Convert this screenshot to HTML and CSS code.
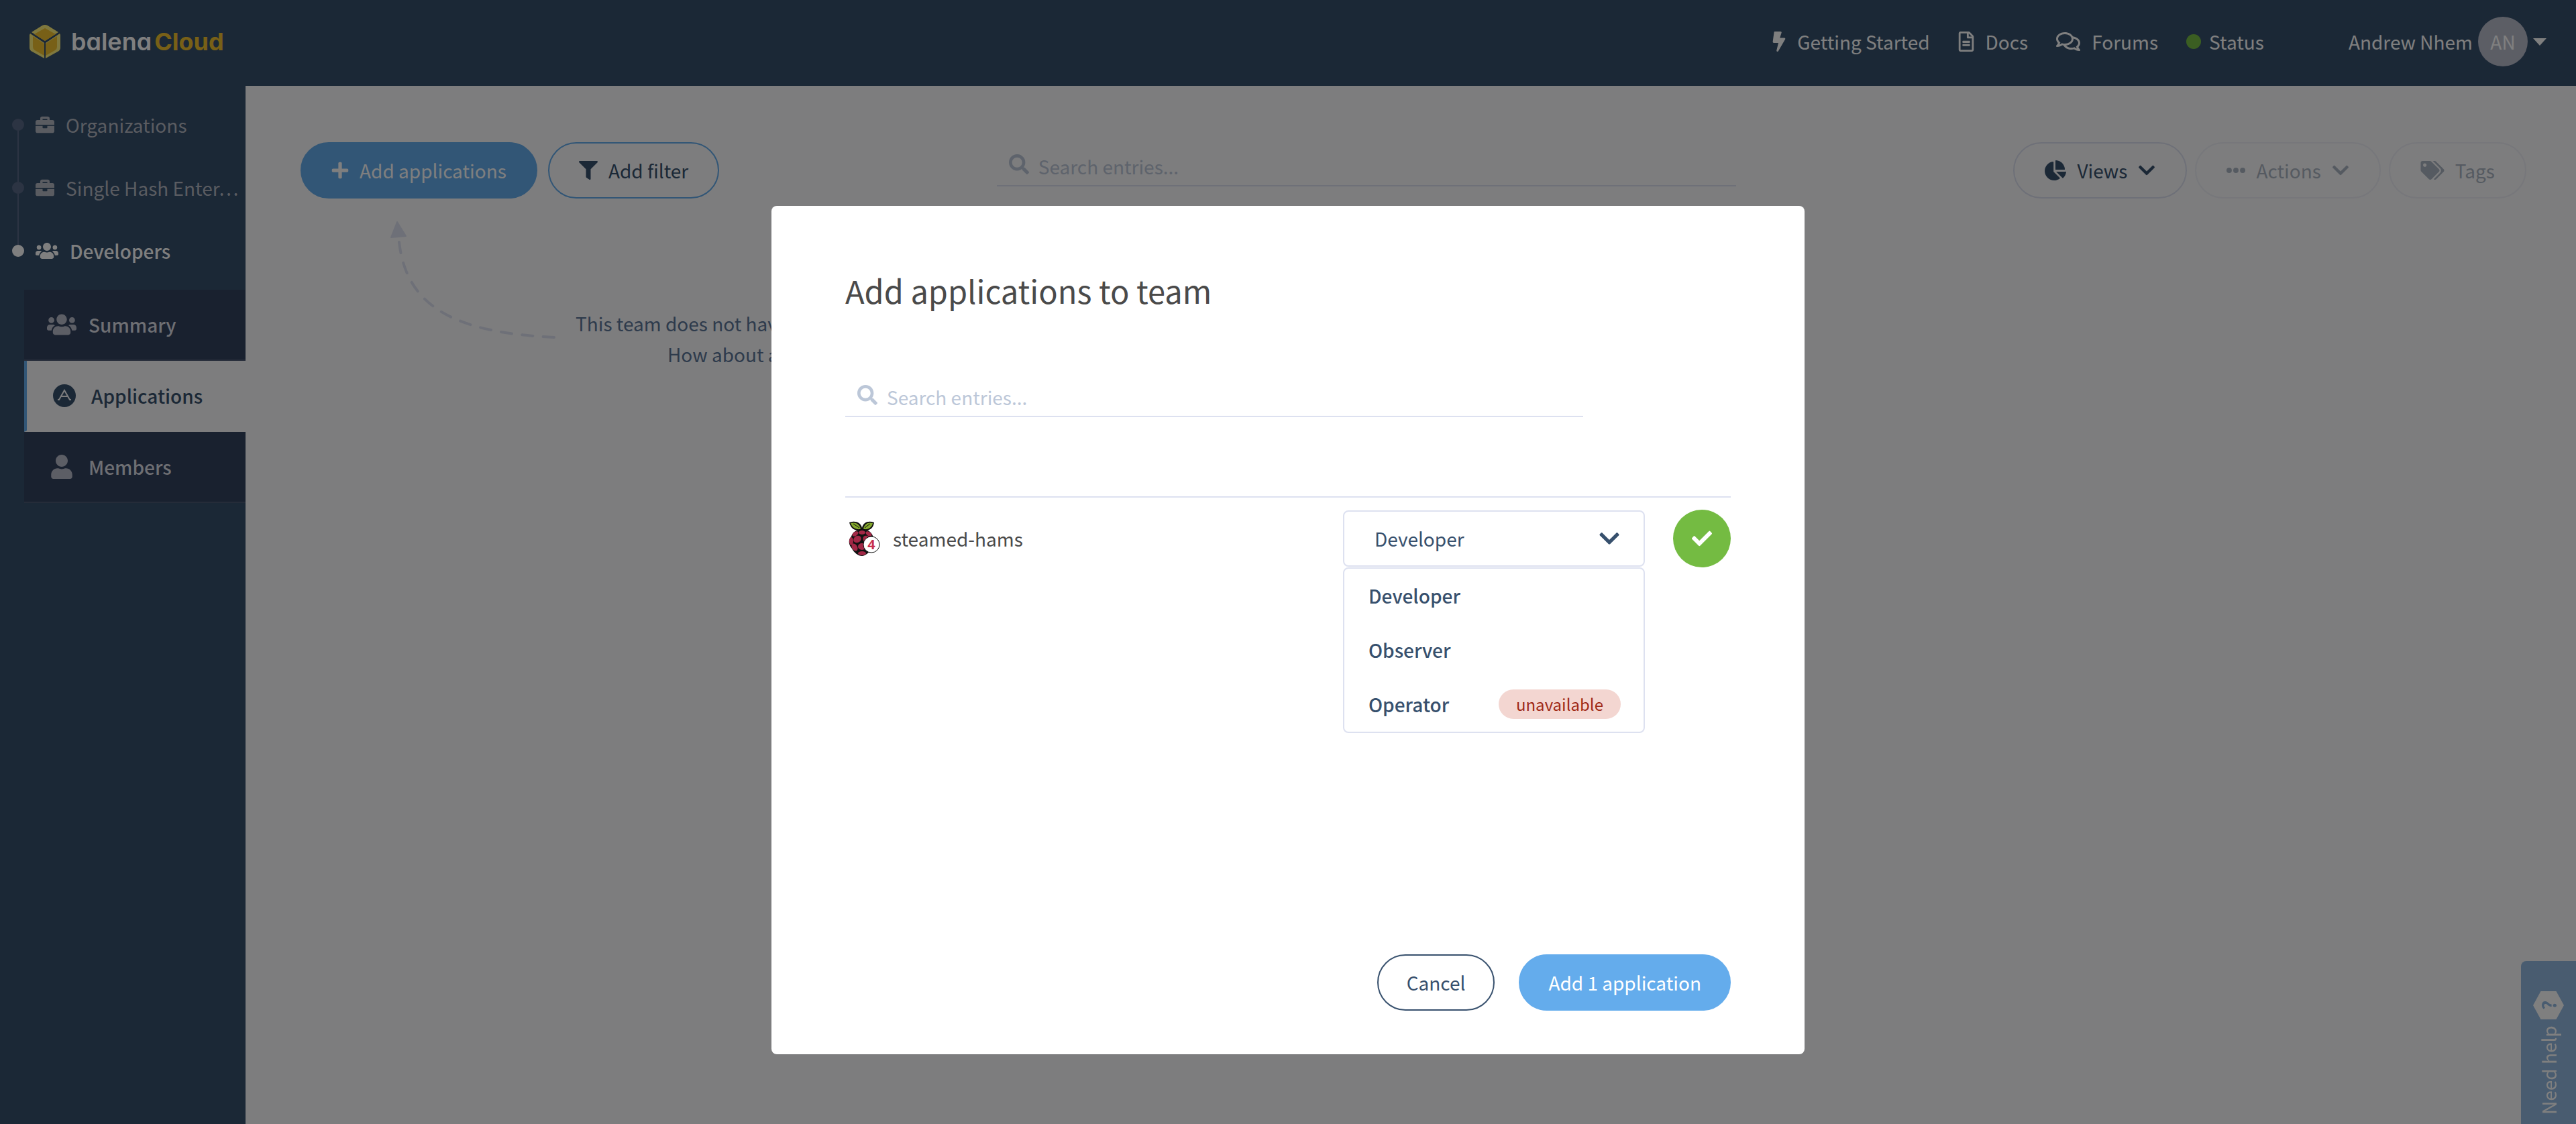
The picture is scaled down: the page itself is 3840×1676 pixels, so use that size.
FILE: index.html
```html
<!DOCTYPE html>
<html lang="en">
<head>
<meta charset="utf-8">
<title>Developers – Applications – balenaCloud</title>
<meta name="viewport" content="width=device-width, initial-scale=1">
<link rel="stylesheet" href="styles.css">
</head>
<body>

<svg class="sprite" aria-hidden="true">
  <symbol id="i-bolt" viewBox="0 0 320 512"><path d="M296 160H180.600l42.600-129.800C227.200 15 215.700 0 200 0H56C44 0 33.800 8.900 32.200 20.800l-32 240C-1.700 275.200 9.500 288 24 288h118.700L96.600 482.500c-3.600 15.200 8 29.500 23.300 29.500 8.400 0 16.400-4.400 20.800-12l176-304c9.300-15.900-2.200-36-20.700-36z"/></symbol>
  <symbol id="i-file" viewBox="0 0 384 512"><path d="M288 248v28c0 6.600-5.400 12-12 12H108c-6.600 0-12-5.400-12-12v-28c0-6.600 5.400-12 12-12h168c6.600 0 12 5.400 12 12zm-12 72H108c-6.600 0-12 5.400-12 12v28c0 6.600 5.400 12 12 12h168c6.600 0 12-5.400 12-12v-28c0-6.600-5.400-12-12-12zm108-188.100V464c0 26.500-21.500 48-48 48H48c-26.500 0-48-21.500-48-48V48C0 21.500 21.500 0 48 0h204.100C264.800 0 277 5.100 286 14.100L369.900 98c9 8.900 14.100 21.200 14.100 33.900zm-128-80V128h76.100L256 51.900zM336 464V176H232c-13.300 0-24-10.700-24-24V48H48v416h288z"/></symbol>
  <symbol id="i-comments" viewBox="0 0 576 512"><path d="M532 386.200c27.500-27.100 44-61.100 44-98.200 0-80-76.500-146.100-176.200-157.900C368.300 72.500 294.300 32 208 32 93.100 32 0 103.600 0 192c0 37 16.500 71 44 98.200-15.300 30.700-37.300 54.500-37.700 54.900-6.300 6.700-8.100 16.500-4.400 25 3.600 8.500 12 14 21.200 14 53.500 0 96.700-20.200 125.200-38.800 9.200 2.100 18.700 3.700 28.400 4.900C208.100 407.600 281.800 448 368 448c20.800 0 40.800-2.400 59.800-6.800C456.300 459.700 499.400 480 553 480c9.200 0 17.500-5.500 21.200-14 3.600-8.500 1.900-18.300-4.400-25-.4-.3-22.500-24.100-37.800-54.800zm-392.800-92.300L122.100 305c-14.100 9.100-28.500 16.300-43.100 21.400 2.700-4.700 5.400-9.700 8-14.800l15.500-31.100L77.700 256C64.200 242.600 48 220.700 48 192c0-60.700 73.300-112 160-112s160 51.300 160 112-73.300 112-160 112c-16.500 0-33-1.900-49-5.600l-19.800-4.500zM498.300 352l-24.700 24.400 15.500 31.100c2.600 5.100 5.300 10.100 8 14.800-14.600-5.100-29-12.300-43.100-21.400l-17.100-11.100-19.900 4.600c-16 3.700-32.500 5.600-49 5.600-54 0-102.200-20.100-131.300-49.700C338 339.500 416 272.900 416 192c0-3.400-.4-6.700-.7-10C479.700 196.500 528 238.800 528 288c0 28.700-16.200 50.600-29.700 64z"/></symbol>
  <symbol id="i-search" viewBox="0 0 512 512"><path d="M505 442.700L405.300 343c-4.500-4.500-10.600-7-17-7H372c27.600-35.300 44-79.700 44-128C416 93.100 322.900 0 208 0S0 93.100 0 208s93.100 208 208 208c48.300 0 92.700-16.400 128-44v16.300c0 6.400 2.500 12.500 7 17l99.700 99.700c9.400 9.400 24.600 9.400 33.900 0l28.300-28.300c9.400-9.400 9.400-24.600.1-34zM208 336c-70.700 0-128-57.200-128-128 0-70.700 57.200-128 128-128 70.700 0 128 57.200 128 128 0 70.700-57.200 128-128 128z"/></symbol>
  <symbol id="i-filter" viewBox="0 0 512 512"><path d="M487.976 0H24.028C2.710 0-8.047 25.866 7.058 40.971L192 225.941V432c0 7.831 3.821 15.170 10.237 19.662l80 55.980C298.020 518.690 320 507.493 320 487.980V225.941l184.947-184.970C520.021 25.896 509.338 0 487.976 0z"/></symbol>
  <symbol id="i-plus" viewBox="0 0 448 512"><path d="M416 208H272V64c0-17.670-14.330-32-32-32h-32c-17.670 0-32 14.330-32 32v144H32c-17.670 0-32 14.330-32 32v32c0 17.670 14.330 32 32 32h144v144c0 17.670 14.330 32 32 32h32c17.670 0 32-14.330 32-32V304h144c17.670 0 32-14.330 32-32v-32c0-17.670-14.330-32-32-32z"/></symbol>
  <symbol id="i-users" viewBox="0 0 640 512"><path d="M96 224c35.300 0 64-28.700 64-64s-28.700-64-64-64-64 28.700-64 64 28.700 64 64 64zm448 0c35.300 0 64-28.700 64-64s-28.700-64-64-64-64 28.700-64 64 28.700 64 64 64zm32 32h-64c-17.600 0-33.500 7.100-45.100 18.600 40.300 22.100 68.900 62 75.100 109.400h66c17.700 0 32-14.300 32-32v-32c0-35.300-28.700-64-64-64zm-256 0c61.900 0 112-50.100 112-112S381.900 32 320 32 208 82.100 208 144s50.100 112 112 112zm76.800 32h-8.300c-20.800 10-43.900 16-68.500 16s-47.600-6-68.500-16h-8.300C179.600 288 128 339.600 128 403.200V432c0 26.500 21.500 48 48 48h288c26.500 0 48-21.500 48-48v-28.800c0-63.600-51.600-115.200-115.200-115.200zm-223.700-13.400C161.500 263.100 145.600 256 128 256H64c-35.300 0-64 28.700-64 64v32c0 17.700 14.300 32 32 32h65.900c6.300-47.400 34.900-87.300 75.200-109.400z"/></symbol>
  <symbol id="i-user" viewBox="0 0 448 512"><path d="M224 256c70.700 0 128-57.300 128-128S294.700 0 224 0 96 57.300 96 128s57.300 128 128 128zm89.600 32h-16.700c-22.200 10.200-46.900 16-72.900 16s-50.600-5.800-72.900-16h-16.700C60.200 288 0 348.200 0 422.400V464c0 26.500 21.500 48 48 48h352c26.500 0 48-21.500 48-48v-41.600c0-74.200-60.200-134.400-134.400-134.400z"/></symbol>
  <symbol id="i-briefcase" viewBox="0 0 512 512"><path d="M320 336c0 8.840-7.160 16-16 16h-96c-8.840 0-16-7.160-16-16v-48H0v144c0 25.600 22.400 48 48 48h416c25.600 0 48-22.400 48-48V288H320v48zm144-208h-80V80c0-25.600-22.400-48-48-48H176c-25.600 0-48 22.400-48 48v48H48c-25.600 0-48 22.400-48 48v80h512v-80c0-25.600-22.400-48-48-48zm-144 0H192V96h128v32z"/></symbol>
  <symbol id="i-chevron" viewBox="0 0 448 512"><path d="M207.029 381.476L12.686 187.132c-9.373-9.373-9.373-24.569 0-33.941l22.667-22.667c9.357-9.357 24.522-9.375 33.901-.04L224 284.505l154.745-154.021c9.379-9.335 24.544-9.317 33.901.04l22.667 22.667c9.373 9.373 9.373 24.569 0 33.941L240.971 381.476c-9.373 9.372-24.569 9.372-33.942 0z"/></symbol>
  <symbol id="i-check" viewBox="0 0 512 512"><path d="M173.898 439.404l-166.400-166.400c-9.997-9.997-9.997-26.206 0-36.204l36.203-36.204c9.997-9.998 26.207-9.998 36.204 0L192 312.690 432.095 72.596c9.997-9.997 26.207-9.997 36.204 0l36.203 36.204c9.997 9.997 9.997 26.206 0 36.204l-294.400 294.401c-9.998 9.997-26.207 9.997-36.204-.001z"/></symbol>
  <symbol id="i-dots" viewBox="0 0 512 512"><circle cx="72" cy="256" r="72"/><circle cx="256" cy="256" r="72"/><circle cx="440" cy="256" r="72"/></symbol>
  <symbol id="i-tags" viewBox="0 0 640 512"><path d="M497.941 225.941L286.059 14.059A48 48 0 0 0 252.118 0H48C21.490 0 0 21.490 0 48v204.118a48 48 0 0 0 14.059 33.941l211.882 211.882c18.744 18.745 49.136 18.746 67.882 0l204.118-204.118c18.745-18.745 18.745-49.137 0-67.882zM112 160c-26.510 0-48-21.490-48-48s21.490-48 48-48 48 21.490 48 48-21.490 48-48 48zm513.941 133.823L421.823 497.941c-18.745 18.745-49.137 18.745-67.882 0l-.36-.36L527.640 323.522c16.999-16.999 26.360-39.600 26.360-63.640s-9.362-46.641-26.360-63.640L331.397 0h48.721a48 48 0 0 1 33.941 14.059l211.882 211.882c18.745 18.745 18.745 49.137 0 67.882z"/></symbol>
  <symbol id="i-pie" viewBox="0 0 544 512"><path d="M527.790 288H290.500l158.030 158.030c6.040 6.040 15.980 6.530 22.190.68 38.700-36.460 65.320-85.610 73.130-140.860 1.340-9.460-6.510-17.850-16.060-17.850zm-15.830-64.800C503.720 103.740 408.260 8.280 288.800.04 279.680-.59 272 7.100 272 16.240V240h223.770c9.140 0 16.820-7.680 16.190-16.800zM224 288V50.710c0-9.550-8.390-17.400-17.840-16.060C86.990 51.490-4.100 155.600.14 280.370 4.500 408.510 114.830 513.590 243.030 511.980c50.400-.63 96.970-16.870 135.260-44.030 7.900-5.600 8.420-17.230 1.570-24.080L224 288z"/></symbol>
</svg>

<header class="topbar">
  <a class="brand" href="#" aria-label="balenaCloud">
    <svg class="brand-mark" viewBox="0 0 46 50" aria-hidden="true">
      <path fill="#fff07c" d="M3 11 L19 1 Q23 -1 27 1 L43 11 L23 24Z M1 13 L22 27 V50 L4 40 Q0 38 0 34 V15Z M45 13 L24 27 V50 L42 40 Q46 38 46 34 V15Z"/>
      <path fill="#f0c12e" d="M23 5 L39 14 L23 24 L7 14Z M5 17 L22 28 V46 L8 38 Q5 36 5 33Z M41 17 L24 28 V46 L38 38 Q41 36 41 33Z"/>
    </svg>
    <span class="brand-name">balena<span class="brand-cloud">Cloud</span></span>
  </a>
  <nav class="top-links" aria-label="Help">
    <a href="#"><svg class="ic-bolt"><use href="#i-bolt"/></svg>Getting Started</a>
    <a href="#"><svg class="ic-file"><use href="#i-file"/></svg>Docs</a>
    <a href="#"><svg class="ic-comments"><use href="#i-comments"/></svg>Forums</a>
    <a class="status" href="#"><span class="status-dot"></span>Status</a>
  </nav>
  <button class="account" type="button">Andrew Nhem<span class="avatar">AN</span><span class="caret"></span></button>
</header>

<div class="shell">
  <aside class="sidebar">
    <ul class="crumbs">
      <li><a href="#"><span class="dot"></span><svg class="ic-28"><use href="#i-briefcase"/></svg><span class="crumb-text">Organizations</span></a></li>
      <li><a href="#"><span class="dot"></span><svg class="ic-28"><use href="#i-briefcase"/></svg><span class="crumb-text">Single Hash Enter…</span></a></li>
      <li class="current"><a href="#"><span class="dot"></span><svg class="ic-crumb-users"><use href="#i-users"/></svg><span class="crumb-text">Developers</span></a></li>
    </ul>
    <ul class="submenu">
      <li><a href="#"><span class="slot"><svg class="ic-users"><use href="#i-users"/></svg></span>Summary</a></li>
      <li class="active"><a href="#"><span class="slot"><svg class="ic-app" viewBox="0 0 34 34"><circle cx="17" cy="17" r="17"/><path d="M7 23 H9 L17 9 L25 23 H27 M12 18 H22" fill="none" stroke="#fafafc" stroke-width="2"/></svg></span>Applications</a></li>
      <li><a href="#"><span class="slot"><svg class="ic-user"><use href="#i-user"/></svg></span>Members</a></li>
    </ul>
  </aside>

  <main class="content">
    <div class="toolbar">
      <div class="group-left">
        <button class="btn btn-primary" type="button"><svg class="ic-plus"><use href="#i-plus"/></svg>Add applications</button>
        <button class="btn btn-outline" type="button"><svg class="ic-28"><use href="#i-filter"/></svg>Add filter</button>
      </div>
      <label class="search page-search"><svg class="ic-search"><use href="#i-search"/></svg><input type="text" placeholder="Search entries..." aria-label="Search applications"></label>
      <div class="group-right">
        <button class="btn btn-quiet" type="button"><svg class="ic-pie"><use href="#i-pie"/></svg>Views<svg class="ic-chevron"><use href="#i-chevron"/></svg></button>
        <button class="btn btn-quiet" type="button" disabled><svg class="ic-28"><use href="#i-dots"/></svg>Actions<svg class="ic-chevron"><use href="#i-chevron"/></svg></button>
        <button class="btn btn-quiet" type="button" disabled><svg class="ic-tags"><use href="#i-tags"/></svg>Tags</button>
      </div>
    </div>
    <div class="empty">
      <svg class="empty-arrow" viewBox="0 0 246 176" aria-hidden="true">
        <path d="M10 1 L23 22 L1 24Z" fill="#dde1f0" stroke="#dde1f0" stroke-width="2" stroke-linejoin="round"/>
        <path d="M13 31 C24 130 100 166 244 173" pathLength="295" fill="none" stroke="#dde1f0" stroke-width="4" stroke-linecap="round" stroke-dasharray="16 15"/>
      </svg>
      <p class="empty-text">This team does not have any applications yet<br>How about adding one?</p>
    </div>
  </main>
</div>

<button class="help" type="button"><span class="help-inner">Need help<span class="help-mark">?</span></span></button>

<div class="backdrop">
  <section class="modal" role="dialog" aria-modal="true" aria-labelledby="modal-title">
    <h2 id="modal-title">Add applications to team</h2>
    <label class="search modal-search"><svg class="ic-search"><use href="#i-search"/></svg><input type="text" placeholder="Search entries..." aria-label="Search entries"></label>
    <ul class="apps">
      <li class="app">
        <svg class="rpi" viewBox="0 0 46 52" aria-hidden="true">
          <path d="M19 13 C10 16 3 11 1 2 C9-1 18 1 20 10 C22 1 30-1 38 2 C37 11 30 16 21 13Z" fill="#111"/>
          <path d="M17 12 C10 13 5 9 3 3 C10 1 16 4 18 11Z M22 11 C24 4 29 1 36 3 C35 9 30 13 23 12Z" fill="#83a72c"/>
          <path d="M7 4 L16 10 M32 4 L24 10" stroke="#111" stroke-width="1"/>
          <path d="M20 12 C28 12 34 16 36 22 C41 30 38 36 35 40 C32 46 25 52 20 52 C14 52 8 47 5 41 C0 36-1 28 4 23 C6 16 13 12 20 12Z" fill="#111"/>
          <g fill="#a22846">
            <ellipse cx="20" cy="17" rx="5" ry="3"/>
            <ellipse cx="10" cy="19" rx="5" ry="3" transform="rotate(-35 10 19)"/>
            <ellipse cx="30" cy="19" rx="5" ry="3" transform="rotate(35 30 19)"/>
            <ellipse cx="13" cy="27" rx="6" ry="5" transform="rotate(-35 13 27)"/>
            <ellipse cx="27" cy="27" rx="6" ry="5" transform="rotate(35 27 27)"/>
            <ellipse cx="4" cy="30" rx="3" ry="6"/>
            <ellipse cx="9" cy="39" rx="4" ry="6" transform="rotate(-30 9 39)"/>
            <ellipse cx="20" cy="38" rx="6" ry="5"/>
            <ellipse cx="20" cy="48" rx="6" ry="3"/>
          </g>
          <circle cx="34" cy="35" r="12" fill="#fff" stroke="#111" stroke-width="1"/>
          <text class="rpi-num" x="34" y="42" text-anchor="middle">4</text>
        </svg>
        <span class="app-name">steamed-hams</span>
        <div class="role">
          <select class="role-select" aria-label="Role for steamed-hams">
            <option selected>Developer</option>
            <option>Observer</option>
            <option disabled>Operator</option>
          </select>
          <svg class="role-chevron"><use href="#i-chevron"/></svg>
          <ul class="role-menu" role="listbox" aria-label="Roles">
            <li role="option" aria-selected="true">Developer</li>
            <li role="option" aria-selected="false">Observer</li>
            <li role="option" aria-selected="false" aria-disabled="true">Operator<span class="badge">unavailable</span></li>
          </ul>
        </div>
        <button class="tick" type="button" aria-label="Selected"><svg class="ic-check"><use href="#i-check"/></svg></button>
      </li>
    </ul>
    <footer class="modal-actions">
      <button class="btn btn-cancel" type="button">Cancel</button>
      <button class="btn btn-primary" type="button">Add 1 application</button>
    </footer>
  </section>
</div>

</body>
</html>
```
FILE: styles.css
```css
:root {
  --navy: #37506d;
  --navy-dark: #32425e;
  --line: #dde1f0;
  --blue: #64acec;
  --page: #fafafc;
}

* { box-sizing: border-box; }

body {
  margin: 0;
  min-height: 100vh;
  display: flex;
  flex-direction: column;
  background: var(--page);
  color: var(--navy);
  font: 28px/40px "Noto Sans CJK KR", "Noto Sans CJK SC", "Noto Sans", sans-serif;
}

ul { list-style: none; margin: 0; padding: 0; }
a { color: inherit; text-decoration: none; }
button, input, select { font: inherit; color: inherit; }
svg { fill: currentColor; flex: none; }
.sprite { position: absolute; width: 0; height: 0; }

.ic-bolt { width: 20px; height: 30px; }
.ic-file { width: 24px; height: 30px; }
.ic-comments { width: 36px; height: 32px; }
.ic-28 { width: 28px; height: 28px; }
.ic-search { width: 30px; height: 30px; }
.ic-plus { width: 26px; height: 28px; }
.ic-pie { width: 32px; height: 30px; }
.ic-chevron { width: 26px; height: 28px; }
.ic-tags { width: 36px; height: 28px; }
.ic-crumb-users { width: 34px; height: 28px; }
.ic-users { width: 44px; height: 36px; }
.ic-app { width: 34px; height: 34px; }
.ic-user { width: 32px; height: 36px; }
.ic-check { width: 30px; height: 30px; }

/* Top bar */
.topbar {
  height: 128px;
  padding: 0 44px 4px;
  display: flex;
  align-items: center;
  background: var(--navy);
  color: #fff;
}
.brand { display: flex; align-items: center; gap: 16px; }
.brand-mark { width: 46px; height: 50px; }
.brand-name {
  font: 600 36px/40px Inter, sans-serif;
  font-feature-settings: "cv11";
}
.brand-cloud { color: #f0c12e; margin-left: 4px; font-weight: 700; }
.top-links { margin-left: auto; display: flex; gap: 42px; }
.top-links a { display: flex; align-items: center; gap: 17px; }
.top-links .status { gap: 12px; }
.status-dot { width: 22px; height: 22px; border-radius: 50%; background: #76bc44; }
.account {
  margin-left: 126px;
  padding: 0;
  border: 0;
  background: none;
  display: flex;
  align-items: center;
  gap: 8px;
}
.avatar {
  width: 74px;
  height: 74px;
  border-radius: 50%;
  background: #b9bccb;
  display: flex;
  align-items: center;
  justify-content: center;
}
.caret {
  border: 10px solid transparent;
  border-top: 11px solid #fff;
  border-bottom: 0;
}

/* Sidebar */
.shell { flex: 1; display: flex; }
.sidebar {
  width: 366px;
  flex: none;
  padding-top: 11px;
  background: var(--navy);
}
.crumbs a {
  height: 94px;
  padding-left: 18px;
  display: flex;
  align-items: center;
  gap: 17px;
  color: #b4b8c2;
}
.crumb-text { white-space: nowrap; }
.dot {
  position: relative;
  width: 18px;
  height: 18px;
  border-radius: 50%;
  background: #596886;
}
.crumbs li:not(.current) .dot::after {
  content: "";
  position: absolute;
  left: 8px;
  top: 18px;
  width: 2px;
  height: 76px;
  background: #596886;
}
.crumbs .current a { color: #fff; font-weight: 500; }
.crumbs .current .dot { background: #fff; }
.submenu { margin: 11px 0 0 36px; }
.submenu li { border-bottom: 2px solid #4b5873; background: var(--navy-dark); }
.submenu a {
  height: 104px;
  padding-left: 34px;
  display: flex;
  align-items: center;
  gap: 18px;
  color: #dcdee6;
  font-weight: 500;
}
.slot { width: 44px; display: flex; justify-content: center; color: #b9bccb; }
.submenu .active { background: var(--page); border-bottom-color: var(--page); border-left: 4px solid var(--blue); }
.submenu .active a, .submenu .active .slot { color: var(--navy); }

/* Page toolbar */
.content { flex: 1; min-width: 0; padding: 84px 74px 84px 82px; }
.toolbar { display: flex; align-items: center; }
.group-left { display: flex; gap: 16px; }
.group-right { display: flex; gap: 12px; }
.btn {
  height: 84px;
  padding: 0 44px;
  border: 2px solid transparent;
  border-radius: 42px;
  background: none;
  display: flex;
  align-items: center;
  gap: 16px;
  white-space: nowrap;
}
.btn-primary { background: var(--blue); border-color: var(--blue); color: #fff; }
.btn-outline { border-color: var(--blue); }
.btn-quiet { padding: 0 45px; border-color: var(--line); }
.btn-quiet:disabled { opacity: .4; }
.btn-cancel { border-color: var(--navy); }

.search {
  height: 48px;
  padding-left: 18px;
  border-bottom: 2px solid var(--line);
  display: flex;
  align-items: flex-start;
  gap: 14px;
  color: #bcc7d8;
}
.search input {
  flex: 1;
  min-width: 0;
  height: 36px;
  padding: 0;
  border: 0;
  outline: 0;
  background: none;
}
.search input::placeholder { color: inherit; opacity: 1; }
.page-search { flex: 0 1 1102px; margin: 0 auto; }

/* Empty state */
.empty { display: flex; margin: 34px 0 0 134px; }
.empty-arrow { width: 246px; height: 176px; }
.empty-text {
  margin: 0;
  padding: 129px 0 0 30px;
  color: #5d7799;
  line-height: 46px;
  text-align: center;
}

/* Help tab */
.help {
  position: fixed;
  right: 0;
  bottom: 0;
  width: 82px;
  height: 243px;
  padding: 0;
  border: 0;
  border-radius: 8px 0 0 0;
  background: #92b8e0;
  color: #fff;
}
.help-inner {
  width: 82px;
  height: 243px;
  padding: 14px 0 45px;
  display: flex;
  align-items: center;
  justify-content: space-between;
  writing-mode: vertical-rl;
  transform: rotate(180deg);
}
.help-mark {
  width: 46px;
  height: 42px;
  display: flex;
  align-items: center;
  justify-content: center;
  background: #fff;
  color: #92b8e0;
  font-weight: 700;
  clip-path: polygon(25% 0, 75% 0, 100% 50%, 75% 100%, 25% 100%, 0 50%);
}

/* Modal */
.backdrop {
  position: fixed;
  inset: 0;
  padding: 202px 40px 0;
  display: flex;
  align-items: center;
  justify-content: center;
  background: rgba(0, 0, 0, .5);
}
.modal {
  width: 1540px;
  max-width: 100%;
  padding: 90px 110px 65px;
  border-radius: 8px;
  background: #fff;
}
.modal h2 {
  margin: 0;
  color: #4a4a4a;
  font-size: 47px;
  font-weight: 400;
  line-height: 72px;
}
.modal-search { width: 1100px; max-width: 100%; margin-top: 105px; }
.apps { margin-top: 118px; border-top: 2px solid var(--line); min-height: 683px; }
.app { padding-top: 18px; display: flex; align-items: center; }
.rpi { width: 46px; height: 52px; margin: 0 20px 0 5px; overflow: visible; }
.rpi-num { font: 700 20px "Open Sans", sans-serif; fill: #c7304f; }
.app-name { color: #4a4a4a; }
.role { position: relative; width: 450px; margin-left: auto; }
.role-select {
  display: block;
  width: 100%;
  height: 84px;
  padding: 0 45px;
  border: 2px solid var(--line);
  border-radius: 8px;
  background: none;
  appearance: none;
}
.role-chevron { position: absolute; right: 38px; top: 25px; width: 30px; height: 34px; pointer-events: none; }
.role-menu {
  position: absolute;
  top: 85px;
  left: 0;
  width: 100%;
  border: 2px solid var(--line);
  border-radius: 8px;
  background: #fff;
  font-weight: 500;
}
.role-menu li {
  height: 81px;
  padding: 0 34px 0 36px;
  display: flex;
  align-items: center;
  justify-content: space-between;
}
.badge {
  padding: 0 26px;
  border-radius: 22px;
  background: #f3d6d1;
  color: #a02a17;
  font-size: 24px;
  font-weight: 400;
  line-height: 44px;
}
.tick {
  width: 86px;
  height: 86px;
  margin-left: 42px;
  padding: 0;
  border: 0;
  border-radius: 50%;
  background: #74bb42;
  color: #fff;
  display: flex;
  align-items: center;
  justify-content: center;
}
.modal-actions { display: flex; justify-content: flex-end; gap: 36px; }
.modal-actions .btn { padding: 0 42px; }
```
